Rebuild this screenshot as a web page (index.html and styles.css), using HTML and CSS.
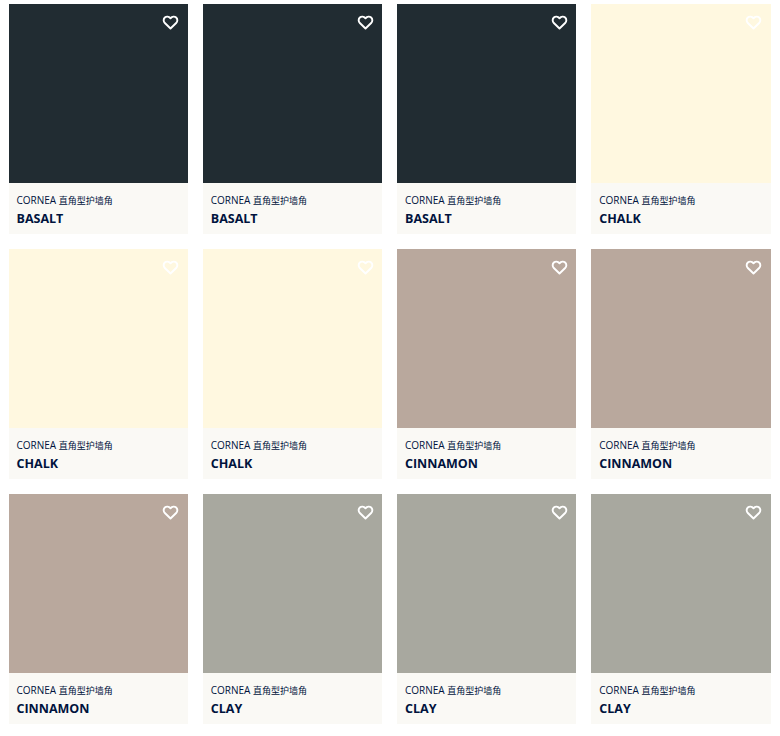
FILE: index.html
```html
<!DOCTYPE html>
<html lang="zh">
<head>
    <meta charset="UTF-8">
    <meta name="viewport" content="width=device-width, initial-scale=1.0">
    <title>Cornea</title>
    <link rel="stylesheet" href="styles.css">
</head>
<body>
    <div class="grid">
        <div class="card">
            <div class="swatch basalt"><svg class="heart" viewBox="0 0 24 24"><path d="M12 20.5 4 12.7C1.8 10.5 1.8 7 4 5c2.2-2 5.5-1.8 8 1 2.5-2.8 5.8-3 8-1 2.2 2 2.2 5.5 0 7.7z"/></svg></div>
            <div class="info"><p class="type">CORNEA <span class="cjk">直角型护墙角</span></p><p class="name">BASALT</p></div>
        </div>
        <div class="card">
            <div class="swatch basalt"><svg class="heart" viewBox="0 0 24 24"><path d="M12 20.5 4 12.7C1.8 10.5 1.8 7 4 5c2.2-2 5.5-1.8 8 1 2.5-2.8 5.8-3 8-1 2.2 2 2.2 5.5 0 7.7z"/></svg></div>
            <div class="info"><p class="type">CORNEA <span class="cjk">直角型护墙角</span></p><p class="name">BASALT</p></div>
        </div>
        <div class="card">
            <div class="swatch basalt"><svg class="heart" viewBox="0 0 24 24"><path d="M12 20.5 4 12.7C1.8 10.5 1.8 7 4 5c2.2-2 5.5-1.8 8 1 2.5-2.8 5.8-3 8-1 2.2 2 2.2 5.5 0 7.7z"/></svg></div>
            <div class="info"><p class="type">CORNEA <span class="cjk">直角型护墙角</span></p><p class="name">BASALT</p></div>
        </div>
        <div class="card">
            <div class="swatch chalk"><svg class="heart" viewBox="0 0 24 24"><path d="M12 20.5 4 12.7C1.8 10.5 1.8 7 4 5c2.2-2 5.5-1.8 8 1 2.5-2.8 5.8-3 8-1 2.2 2 2.2 5.5 0 7.7z"/></svg></div>
            <div class="info"><p class="type">CORNEA <span class="cjk">直角型护墙角</span></p><p class="name">CHALK</p></div>
        </div>
        <div class="card">
            <div class="swatch chalk"><svg class="heart" viewBox="0 0 24 24"><path d="M12 20.5 4 12.7C1.8 10.5 1.8 7 4 5c2.2-2 5.5-1.8 8 1 2.5-2.8 5.8-3 8-1 2.2 2 2.2 5.5 0 7.7z"/></svg></div>
            <div class="info"><p class="type">CORNEA <span class="cjk">直角型护墙角</span></p><p class="name">CHALK</p></div>
        </div>
        <div class="card">
            <div class="swatch chalk"><svg class="heart" viewBox="0 0 24 24"><path d="M12 20.5 4 12.7C1.8 10.5 1.8 7 4 5c2.2-2 5.5-1.8 8 1 2.5-2.8 5.8-3 8-1 2.2 2 2.2 5.5 0 7.7z"/></svg></div>
            <div class="info"><p class="type">CORNEA <span class="cjk">直角型护墙角</span></p><p class="name">CHALK</p></div>
        </div>
        <div class="card">
            <div class="swatch cinnamon"><svg class="heart" viewBox="0 0 24 24"><path d="M12 20.5 4 12.7C1.8 10.5 1.8 7 4 5c2.2-2 5.5-1.8 8 1 2.5-2.8 5.8-3 8-1 2.2 2 2.2 5.5 0 7.7z"/></svg></div>
            <div class="info"><p class="type">CORNEA <span class="cjk">直角型护墙角</span></p><p class="name">CINNAMON</p></div>
        </div>
        <div class="card">
            <div class="swatch cinnamon"><svg class="heart" viewBox="0 0 24 24"><path d="M12 20.5 4 12.7C1.8 10.5 1.8 7 4 5c2.2-2 5.5-1.8 8 1 2.5-2.8 5.8-3 8-1 2.2 2 2.2 5.5 0 7.7z"/></svg></div>
            <div class="info"><p class="type">CORNEA <span class="cjk">直角型护墙角</span></p><p class="name">CINNAMON</p></div>
        </div>
        <div class="card">
            <div class="swatch cinnamon"><svg class="heart" viewBox="0 0 24 24"><path d="M12 20.5 4 12.7C1.8 10.5 1.8 7 4 5c2.2-2 5.5-1.8 8 1 2.5-2.8 5.8-3 8-1 2.2 2 2.2 5.5 0 7.7z"/></svg></div>
            <div class="info"><p class="type">CORNEA <span class="cjk">直角型护墙角</span></p><p class="name">CINNAMON</p></div>
        </div>
        <div class="card">
            <div class="swatch clay"><svg class="heart" viewBox="0 0 24 24"><path d="M12 20.5 4 12.7C1.8 10.5 1.8 7 4 5c2.2-2 5.5-1.8 8 1 2.5-2.8 5.8-3 8-1 2.2 2 2.2 5.5 0 7.7z"/></svg></div>
            <div class="info"><p class="type">CORNEA <span class="cjk">直角型护墙角</span></p><p class="name">CLAY</p></div>
        </div>
        <div class="card">
            <div class="swatch clay"><svg class="heart" viewBox="0 0 24 24"><path d="M12 20.5 4 12.7C1.8 10.5 1.8 7 4 5c2.2-2 5.5-1.8 8 1 2.5-2.8 5.8-3 8-1 2.2 2 2.2 5.5 0 7.7z"/></svg></div>
            <div class="info"><p class="type">CORNEA <span class="cjk">直角型护墙角</span></p><p class="name">CLAY</p></div>
        </div>
        <div class="card">
            <div class="swatch clay"><svg class="heart" viewBox="0 0 24 24"><path d="M12 20.5 4 12.7C1.8 10.5 1.8 7 4 5c2.2-2 5.5-1.8 8 1 2.5-2.8 5.8-3 8-1 2.2 2 2.2 5.5 0 7.7z"/></svg></div>
            <div class="info"><p class="type">CORNEA <span class="cjk">直角型护墙角</span></p><p class="name">CLAY</p></div>
        </div>
    </div>
</body>
</html>
```

FILE: styles.css
```css
body {
    font-family: "Open Sans", "Noto Sans CJK SC", sans-serif;
    background-color: #fff;
    color: #00133d;
    margin: 0;
    padding: 4px 9.3px 0 8.7px;
}

.grid {
    display: grid;
    grid-template-columns: repeat(4, 1fr);
    gap: 15px;
}

.swatch {
    height: 179px;
    display: flex;
    justify-content: flex-end;
    align-items: flex-start;
    padding: 10px 8.5px 0 0;
    box-sizing: border-box;
}

.basalt {
    background-color: #212c32;
}

.chalk {
    background-color: #fff8e0;
}

.cinnamon {
    background-color: #b9a89d;
}

.clay {
    background-color: #a8a89f;
}

.heart {
    width: 17px;
    height: 17px;
    fill: none;
    stroke: #fff;
    stroke-width: 2.7;
    stroke-linejoin: round;
}

.info {
    height: 51px;
    background-color: #faf9f5;
    padding: 10px 8px 0 7.8px;
    box-sizing: border-box;
}

.type {
    font-size: 10px;
    line-height: 14px;
    margin: 0 0 2px;
}

.cjk {
    font-size: 9px;
}

.name {
    font-size: 12.5px;
    font-weight: 700;
    line-height: 17px;
    margin: 0;
}
```
